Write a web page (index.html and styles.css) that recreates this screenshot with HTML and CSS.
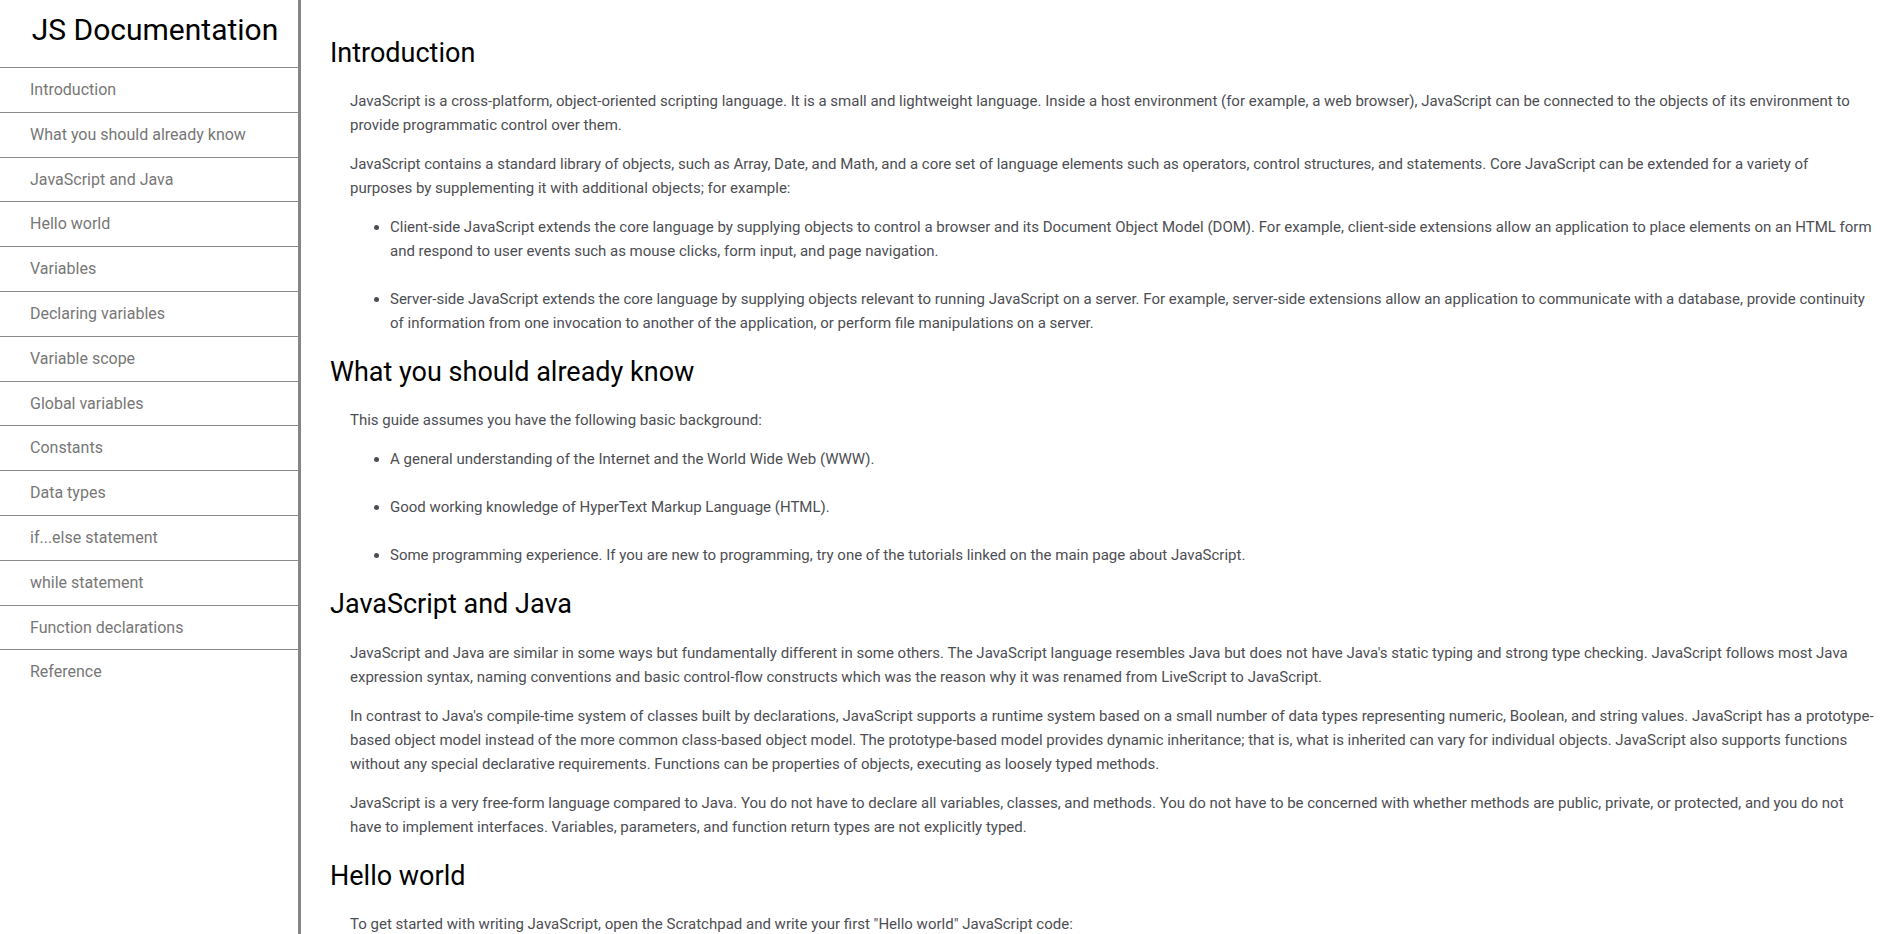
FILE: index.html
```html
<!DOCTYPE html>
<html lang="en">
<head>
<meta charset="utf-8">
<title>JS Documentation</title>
<link rel="stylesheet" href="styles.css">
</head>
<body>
<div class="page">
  <nav class="navbar">
    <header class="nav-title">JS Documentation</header>
    <ul class="nav-list">
      <li><a class="nav-link" href="#Introduction">Introduction</a></li>
      <li><a class="nav-link" href="#What_you_should_already_know">What you should already know</a></li>
      <li><a class="nav-link" href="#JavaScript_and_Java">JavaScript and Java</a></li>
      <li><a class="nav-link" href="#Hello_world">Hello world</a></li>
      <li><a class="nav-link" href="#Variables">Variables</a></li>
      <li><a class="nav-link" href="#Declaring_variables">Declaring variables</a></li>
      <li><a class="nav-link" href="#Variable_scope">Variable scope</a></li>
      <li><a class="nav-link" href="#Global_variables">Global variables</a></li>
      <li><a class="nav-link" href="#Constants">Constants</a></li>
      <li><a class="nav-link" href="#Data_types">Data types</a></li>
      <li><a class="nav-link" href="#if...else_statement">if...else statement</a></li>
      <li><a class="nav-link" href="#while_statement">while statement</a></li>
      <li><a class="nav-link" href="#Function_declarations">Function declarations</a></li>
      <li><a class="nav-link" href="#Reference">Reference</a></li>
    </ul>
  </nav>
  <main class="main-doc">
    <section class="main-section" id="Introduction">
      <header class="section-title">Introduction</header>
      <article class="section-body">
        <p>JavaScript is a cross-platform, object-oriented scripting language. It is a small and lightweight language. Inside a host environment (for example, a web browser), JavaScript can be connected to the objects of its environment to provide programmatic control over them.</p>
        <p>JavaScript contains a standard library of objects, such as Array, Date, and Math, and a core set of language elements such as operators, control structures, and statements. Core JavaScript can be extended for a variety of purposes by supplementing it with additional objects; for example:</p>
        <ul class="bullets">
          <li>Client-side JavaScript extends the core language by supplying objects to control a browser and its Document Object Model (DOM). For example, client-side extensions allow an application to place elements on an HTML form and respond to user events such as mouse clicks, form input, and page navigation.</li>
          <li>Server-side JavaScript extends the core language by supplying objects relevant to running JavaScript on a server. For example, server-side extensions allow an application to communicate with a database, provide continuity of information from one invocation to another of the application, or perform file manipulations on a server.</li>
        </ul>
      </article>
    </section>
    <section class="main-section" id="What_you_should_already_know">
      <header class="section-title">What you should already know</header>
      <article class="section-body">
        <p>This guide assumes you have the following basic background:</p>
        <ul class="bullets">
          <li>A general understanding of the Internet and the World Wide Web (WWW).</li>
          <li>Good working knowledge of HyperText Markup Language (HTML).</li>
          <li>Some programming experience. If you are new to programming, try one of the tutorials linked on the main page about JavaScript.</li>
        </ul>
      </article>
    </section>
    <section class="main-section" id="JavaScript_and_Java">
      <header class="section-title">JavaScript and Java</header>
      <article class="section-body">
        <p>JavaScript and Java are similar in some ways but fundamentally different in some others. The JavaScript language resembles Java but does not have Java's static typing and strong type checking. JavaScript follows most Java expression syntax, naming conventions and basic control-flow constructs which was the reason why it was renamed from LiveScript to JavaScript.</p>
        <p>In contrast to Java's compile-time system of classes built by declarations, JavaScript supports a runtime system based on a small number of data types representing numeric, Boolean, and string values. JavaScript has a prototype-based object model instead of the more common class-based object model. The prototype-based model provides dynamic inheritance; that is, what is inherited can vary for individual objects. JavaScript also supports functions without any special declarative requirements. Functions can be properties of objects, executing as loosely typed methods.</p>
        <p>JavaScript is a very free-form language compared to Java. You do not have to declare all variables, classes, and methods. You do not have to be concerned with whether methods are public, private, or protected, and you do not have to implement interfaces. Variables, parameters, and function return types are not explicitly typed.</p>
      </article>
    </section>
    <section class="main-section" id="Hello_world">
      <header class="section-title">Hello world</header>
      <article class="section-body">
        <p>To get started with writing JavaScript, open the Scratchpad and write your first "Hello world" JavaScript code:</p>
        <pre class="code">function greetMe(yourName) { alert("Hello " + yourName); }
greetMe("World");</pre>
        <p>Select the code in the pad and hit Ctrl+R to watch it unfold in your browser!</p>
      </article>
    </section>
  </main>
</div>
</body>
</html>
```

FILE: styles.css
```css
html, body {
  margin: 0;
  padding: 0;
  background: #ffffff;
}

body {
  font-family: Roboto, "Liberation Sans", Arial, sans-serif;
  color: #4d4e53;
}

.page {
  display: flex;
  align-items: stretch;
  min-height: 100vh;
}

.navbar {
  flex: 0 0 298px;
  width: 298px;
  border-right: 3px solid #858585;
}

.nav-title {
  display: block;
  padding: 8px 0 15px 12px;
  font-size: 30px;
  line-height: 44px;
  font-weight: 400;
  color: #000000;
  text-align: center;
}

.nav-list {
  list-style: none;
  margin: 0;
  padding: 0;
}

.nav-list li {
  border-top: 1px solid #8a8a8a;
}

.nav-link {
  display: block;
  padding: 10px 30px;
  font-size: 16px;
  line-height: 23.8px;
  color: #777777;
  text-decoration: none;
}

.main-doc {
  flex: 1 1 auto;
  min-width: 0;
  padding: 31px 26px 40px 29px;
}

.section-title {
  display: block;
  padding-top: 2px;
  font-size: 27px;
  line-height: 41.2px;
  color: #000000;
  margin: 0;
}

.main-section + .main-section {
  margin-top: 15px;
}

.section-body {
  display: block;
  padding-left: 20px;
  font-size: 15px;
  line-height: 24px;
  color: #4d4e53;
}

.section-body p {
  margin: 15px 0 0;
}

.bullets {
  margin: 15px 0 0;
  padding-left: 40px;
}

.bullets li + li {
  margin-top: 24px;
}

.code {
  margin: 15px 0 0;
  padding: 15px;
  background: #f7f7f7;
  font-family: "Liberation Mono", monospace;
  font-size: 14px;
  line-height: 22px;
  color: #333333;
}
```
